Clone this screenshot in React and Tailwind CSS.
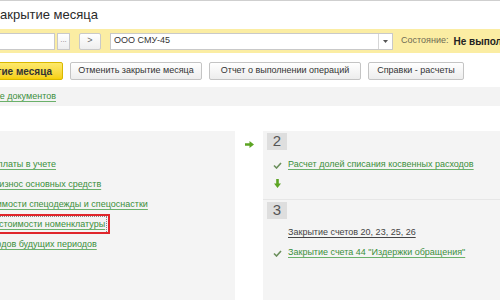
import React from "react";

const Link = ({ children, className = "" }) => (
  <span className={"text-[#3b8f3b] underline decoration-[#6ab06a] underline-offset-2 whitespace-nowrap " + className}>
    {children}
  </span>
);

const Btn = ({ children, className = "" }) => (
  <div
    className={
      "h-[18px] flex items-center px-[9px] border border-[#c4c4c4] rounded-[2px] bg-gradient-to-b from-white to-[#ededed] text-[9px] text-[#333] whitespace-nowrap shrink-0 " +
      className
    }
  >
    {children}
  </div>
);

const Check = () => (
  <svg width="9" height="7" viewBox="0 0 9 7" className="shrink-0">
    <path d="M1 3.5 L3.5 6 L8 1" fill="none" stroke="#6b8f5c" strokeWidth="1.6" />
  </svg>
);

export default function App() {
  return (
    <div className="w-[500px] h-[300px] overflow-hidden bg-white font-['Liberation_Sans',Arial,sans-serif] text-[#333] flex flex-col">
      <div className="h-px bg-[#cfcfcf] shrink-0" />
      {/* title */}
      <div className="h-[28px] shrink-0 flex items-center">
        <div className="w-[98px] flex justify-end shrink-0">
          <span className="text-[13px] text-[#2a2a2a] whitespace-nowrap">Закрытие месяца</span>
        </div>
      </div>
      {/* yellow bar */}
      <div className="h-[24px] shrink-0 bg-[#fbeda3] flex items-center">
        <div className="w-[55px] flex justify-end shrink-0">
          <div className="w-[80px] h-[17px] bg-white border border-[#c9c9c9] shrink-0" />
        </div>
        <div className="ml-[2px] w-[13px] h-[17px] shrink-0 border border-[#c9c9c9] bg-gradient-to-b from-white to-[#eeeeee] text-[8px] text-[#888] flex items-end justify-center pb-[3px]">...</div>
        <div className="ml-[9px] w-[22px] h-[17px] shrink-0 border border-[#c9c9c9] rounded-[2px] bg-gradient-to-b from-white to-[#eeeeee] text-[9px] text-[#666] flex items-center justify-center">&gt;</div>
        <div className="ml-[9px] w-[283px] h-[17px] shrink-0 bg-white border border-[#c9c9c9] flex items-center">
          <span className="flex-1 pl-[3px] text-[9px] text-[#333]">ООО СМУ-45</span>
          <div className="w-[14px] h-full border-l border-[#d6d6d6] flex items-center justify-center">
            <svg width="5" height="3" viewBox="0 0 5 3"><path d="M0 0 H5 L2.5 3 Z" fill="#555" /></svg>
          </div>
        </div>
        <span className="ml-[8px] shrink-0 text-[9px] text-[#6e6a55] whitespace-nowrap">Состояние:</span>
        <span className="ml-[5px] shrink-0 text-[10px] font-bold text-[#222] whitespace-nowrap">Не выполнено</span>
      </div>
      <div className="h-[9px] shrink-0" />
      {/* buttons */}
      <div className="h-[18px] shrink-0 flex items-center">
        <div className="w-[63px] flex justify-end shrink-0">
          <div className="h-[18px] flex items-center pl-[10px] pr-[10px] border border-[#d9b800] rounded-[2px] bg-gradient-to-b from-[#fde96a] to-[#f6d000] text-[10px] font-bold text-[#333] whitespace-nowrap shrink-0">
            Выполнить закрытие месяца
          </div>
        </div>
        <Btn className="ml-[7px] w-[132px] justify-center">Отменить закрытие месяца</Btn>
        <Btn className="ml-[7px] w-[152px] justify-center">Отчет о выполнении операций</Btn>
        <Btn className="ml-[7px] w-[96px] justify-center">Справки - расчеты</Btn>
      </div>
      <div className="h-[7px] shrink-0" />
      {/* gray band */}
      <div className="h-[19px] shrink-0 bg-[#f3f3f3] flex items-center">
        <div className="w-[56px] flex justify-end shrink-0">
          <Link className="text-[9px]">Проведение документов</Link>
        </div>
      </div>
      <div className="h-[25px] shrink-0" />
      {/* panels */}
      <div className="flex-1 flex">
        <div className="w-[235px] shrink-0 bg-[#f4f4f4] pt-[28px] flex flex-col">
          <div className="-ml-[66px] flex flex-col gap-[8px] text-[9px]">
            <div className="h-[12px] flex items-center"><Link>Отражение зарплаты в учете</Link></div>
            <div className="h-[12px] flex items-center"><Link>Амортизация и износ основных средств</Link></div>
            <div className="h-[12px] flex items-center"><Link>Погашение стоимости спецодежды и спецоснастки</Link></div>
            <div className="h-[12px] flex items-center relative">
              <Link className="outline-1 outline-dotted outline-[#888] outline-offset-1">Корректировка стоимости номенклатуры</Link>
              <div className="absolute left-0 top-[-5px] w-[176px] h-[20px] border-2 border-[#e0262b]" />
            </div>
            <div className="h-[12px] flex items-center"><Link>Списание расходов будущих периодов</Link></div>
          </div>
        </div>
        <div className="w-[28px] shrink-0 flex justify-center pt-[10px]">
          <svg width="9" height="7" viewBox="0 0 9 7">
            <path d="M0 2.2 H4.5 V0 L9 3.5 L4.5 7 V4.8 H0 Z" fill="#5ca423" />
          </svg>
        </div>
        <div className="flex-1 flex flex-col">
          <div className="h-[68px] bg-[#f4f4f4] flex flex-col pt-[2px] pl-[4px]">
            <div className="w-[20px] h-[17px] bg-[#dedede] flex items-center justify-center text-[15px] text-[#555]">2</div>
            <div className="mt-[9px] flex items-center h-[12px]">
              <div className="w-[21px] flex justify-center"><Check /></div>
              <Link className="text-[9px]">Расчет долей списания косвенных расходов</Link>
            </div>
            <div className="mt-[8px] w-[21px] flex justify-center">
              <svg width="7" height="9" viewBox="0 0 7 9">
                <path d="M2.2 0 H4.8 V4.5 H7 L3.5 9 L0 4.5 H2.2 Z" fill="#5ca423" />
              </svg>
            </div>
          </div>
          <div className="flex-1 bg-[#f4f4f4] border-t border-[#e6e6e6] flex flex-col pt-[2px] pl-[4px]">
            <div className="w-[20px] h-[17px] bg-[#dedede] flex items-center justify-center text-[15px] text-[#555]">3</div>
            <div className="mt-[8px] flex items-center h-[12px]">
              <div className="w-[21px]" />
              <span className="text-[9px] text-[#444] underline underline-offset-2 whitespace-nowrap">Закрытие счетов 20, 23, 25, 26</span>
            </div>
            <div className="mt-[8px] flex items-center h-[12px]">
              <div className="w-[21px] flex justify-center"><Check /></div>
              <Link className="text-[9px]">Закрытие счета 44 "Издержки обращения"</Link>
            </div>
          </div>
        </div>
      </div>
    </div>
  );
}
